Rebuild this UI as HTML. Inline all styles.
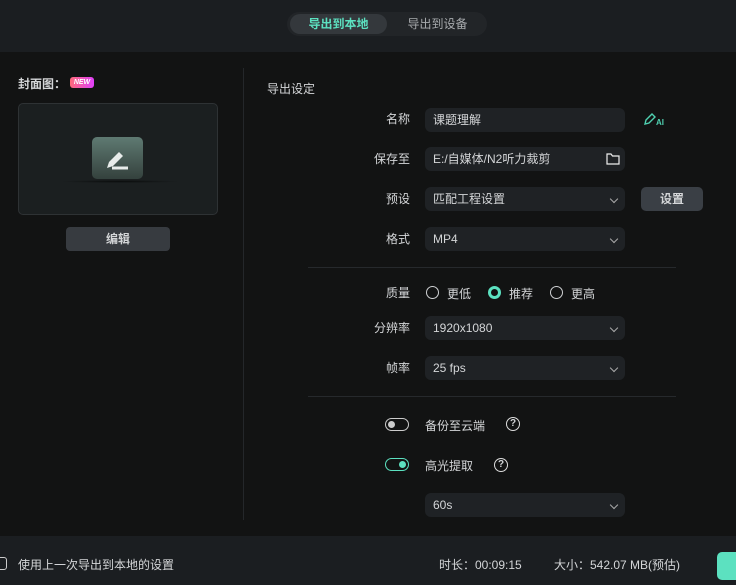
<!DOCTYPE html>
<html><head><meta charset="utf-8"><style>
*{margin:0;padding:0;box-sizing:border-box}
body{width:736px;height:585px;background:#121313;font-family:"Liberation Sans","Noto Sans CJK SC",sans-serif;color:#d4d6d8;font-size:12px;position:relative;overflow:hidden}
.a{position:absolute}
.top{left:0;top:0;width:736px;height:52px;background:#1b1e21}
.tabs{left:287px;top:12px;width:200px;height:24px;border-radius:12px;background:#222528}
.tab1{left:290px;top:14px;width:97px;height:20px;border-radius:10px;background:#34383c;color:#5ce1c0;text-align:center;line-height:20px;font-weight:bold}
.tab2{left:390px;top:14px;width:95px;height:20px;text-align:center;line-height:20px;color:#a8abae}
.lbl{width:100px;text-align:right;left:310px;line-height:22px}
.inp{left:425px;width:200px;height:24px;border-radius:6px;background:#1f2225;padding-left:8px;line-height:24px}
.chev{position:absolute;right:8px;top:9px;width:6px;height:6px;border-right:1.2px solid #aaa;border-bottom:1.2px solid #aaa;transform:rotate(45deg)}
.hr{left:308px;width:368px;height:1px;background:#26292c}
.radio{width:13px;height:13px;border-radius:50%;border:1.3px solid #cfd1d3}
.bottom{left:0;top:536px;width:736px;height:49px;background:#1b1e21}
.q{width:14px;height:14px;border-radius:50%;border:1.4px solid #ddd;font-size:10px;text-align:center;line-height:11px;font-weight:bold}
</style></head><body>
<div class="a top"></div>
<div class="a tabs"></div>
<div class="a tab1">导出到本地</div>
<div class="a tab2">导出到设备</div>

<div class="a" style="left:18px;top:75px;font-weight:bold;font-size:12px">封面图：</div>
<div class="a" style="left:70px;top:77px;width:24px;height:11px;border-radius:3px;background:linear-gradient(90deg,#ff6a7a,#e040fb);font-size:7px;font-style:italic;font-weight:bold;color:#fff;text-align:center;line-height:11px">NEW</div>
<div class="a" style="left:18px;top:103px;width:200px;height:112px;border:1px solid #2e3234;border-radius:5px;background:#1b1f20"></div>
<div class="a" style="left:92px;top:137px;width:51px;height:42px;border-radius:5px;background:linear-gradient(#5f7a72,#34413d)">
<svg width="51" height="42" viewBox="0 0 51 42"><path d="M15 31l2-6 10-10 4 4-10 10z" fill="#e8ecea"/><path d="M20 31h16" stroke="#e8ecea" stroke-width="3"/></svg></div>
<div class="a" style="left:60px;top:180px;width:120px;height:3px;background:radial-gradient(#0a0c0c,transparent 70%)"></div>
<div class="a" style="left:66px;top:227px;width:104px;height:24px;border-radius:4px;background:#373b40;text-align:center;line-height:24px;font-weight:bold">编辑</div>
<div class="a" style="left:243px;top:68px;width:1px;height:452px;background:#24272a"></div>

<div class="a" style="left:267px;top:80px">导出设定</div>
<div class="a lbl" style="top:108px">名称</div>
<div class="a inp" style="top:108px">课题理解</div>
<svg class="a" style="left:643px;top:111px" width="22" height="16" viewBox="0 0 22 16"><path d="M2 13l1-4 6-6 3 3-6 6z" fill="none" stroke="#4fd1b1" stroke-width="1.4"/><text x="13" y="14" font-size="8" fill="#4fd1b1" font-family="Liberation Sans" font-weight="bold">AI</text></svg>
<div class="a lbl" style="top:148px">保存至</div>
<div class="a inp" style="top:147px">E:/自媒体/N2听力裁剪<svg style="position:absolute;right:5px;top:6px" width="14" height="12" viewBox="0 0 14 12"><path d="M1 1h4l1.5 2H13v8H1z" fill="none" stroke="#eee" stroke-width="1.2"/></svg></div>
<div class="a lbl" style="top:188px">预设</div>
<div class="a inp" style="top:187px">匹配工程设置<i class="chev"></i></div>
<div class="a" style="left:641px;top:187px;width:62px;height:24px;border-radius:5px;background:#3a3f45;text-align:center;line-height:24px;font-weight:bold">设置</div>
<div class="a lbl" style="top:228px">格式</div>
<div class="a inp" style="top:227px">MP4<i class="chev"></i></div>
<div class="a hr" style="top:267px"></div>

<div class="a lbl" style="top:282px">质量</div>
<div class="a radio" style="left:426px;top:286px"></div><div class="a" style="left:447px;top:285px">更低</div>
<div class="a radio" style="left:488px;top:286px;border:3.5px solid #5ce1c0;background:#111"></div><div class="a" style="left:509px;top:285px">推荐</div>
<div class="a radio" style="left:550px;top:286px"></div><div class="a" style="left:571px;top:285px">更高</div>
<div class="a lbl" style="top:317px">分辨率</div>
<div class="a inp" style="top:316px">1920x1080<i class="chev"></i></div>
<div class="a lbl" style="top:357px">帧率</div>
<div class="a inp" style="top:356px">25 fps<i class="chev"></i></div>
<div class="a hr" style="top:396px"></div>

<div class="a" style="left:385px;top:418px;width:24px;height:13px;border-radius:7px;border:1.3px solid #ccc"><div style="position:absolute;left:2px;top:2px;width:7px;height:7px;border-radius:50%;background:#ccc"></div></div>
<div class="a" style="left:425px;top:417px">备份至云端</div>
<div class="a q" style="left:506px;top:417px">?</div>
<div class="a" style="left:385px;top:458px;width:24px;height:13px;border-radius:7px;border:1.3px solid #5ce1c0"><div style="position:absolute;right:2px;top:2px;width:7px;height:7px;border-radius:50%;background:#5ce1c0"></div></div>
<div class="a" style="left:425px;top:457px">高光提取</div>
<div class="a q" style="left:494px;top:458px">?</div>
<div class="a inp" style="top:493px">60s<i class="chev"></i></div>

<div class="a bottom"></div>
<div class="a" style="left:-6px;top:557px;width:13px;height:13px;border:1.2px solid #ccc;border-radius:3px"></div>
<div class="a" style="left:18px;top:556px">使用上一次导出到本地的设置</div>
<div class="a" style="left:439px;top:556px">时长：00:09:15</div>
<div class="a" style="left:554px;top:556px">大小：542.07 MB(预估)</div>
<div class="a" style="left:717px;top:552px;width:30px;height:28px;border-radius:5px;background:#5ce1c0"></div>
</body></html>
